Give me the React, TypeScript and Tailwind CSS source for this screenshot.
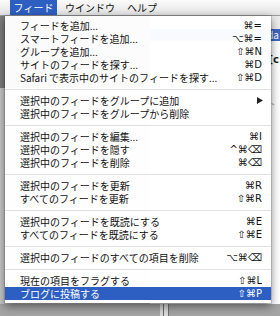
import React from 'react'

type Row = [string, string]

const GROUPS: Row[][] = [
  [
    ['フィードを追加...', '⌘='],
    ['スマートフィードを追加...', '⌥⌘='],
    ['グループを追加...', '⇧⌘N'],
    ['サイトのフィードを探す...', '⌘D'],
    ['Safari で表示中のサイトのフィードを探す...', '⇧⌘D'],
  ],
  [
    ['選択中のフィードをグループに追加', '>'],
    ['選択中のフィードをグループから削除', ''],
  ],
  [
    ['選択中のフィードを編集...', '⌘I'],
    ['選択中のフィードを隠す', '^⌘⌫'],
    ['選択中のフィードを削除', '⌘⌫'],
  ],
  [
    ['選択中のフィードを更新', '⌘R'],
    ['すべてのフィードを更新', '⇧⌘R'],
  ],
  [
    ['選択中のフィードを既読にする', '⌘E'],
    ['すべてのフィードを既読にする', '⇧⌘E'],
  ],
  [['選択中のフィードのすべての項目を削除', '⌥⌘⌫']],
  [
    ['現在の項目をフラグする', '⇧⌘L'],
    ['ブログに投稿する', '⇧⌘P'],
  ],
]

function MenuRow({ label, keys, active }: { label: string; keys: string; active: boolean }) {
  return (
    <div
      className={`flex h-[13px] items-center justify-between overflow-hidden pl-[15px] pr-[9px] ${
        active ? 'bg-[#2d5ec2] text-white' : 'text-[#111]'
      }`}
    >
      <span className="inline-block h-[13px] overflow-hidden whitespace-nowrap leading-[13px]">{label}</span>
      {keys === '>' ? (
        <svg width="6" height="7" viewBox="0 0 6 7" className="mr-[-1px]">
          <path d="M0 0 L6 3.5 L0 7 Z" fill="#222" />
        </svg>
      ) : (
        <span className="inline-block h-[13px] overflow-hidden whitespace-nowrap font-['DejaVu_Sans',sans-serif] text-[10px] leading-[13px]">
          {keys}
        </span>
      )}
    </div>
  )
}

export default function App() {
  const last = GROUPS.length - 1

  return (
    <div className="relative flex h-[316px] w-[280px] flex-col overflow-hidden bg-[#a9a9a9] font-['Noto_Sans_CJK_JP',sans-serif] text-[10px]">
      {/* menu bar */}
      <div className="flex h-[16px] items-stretch border-b border-[#9c9c9c] bg-gradient-to-b from-[#fbfbfb] to-[#e4e4e4] text-[10px] text-[#111]">
        <div className="ml-[10px] flex w-[47px] items-center justify-center bg-[#2d5ec2] text-white">フィード</div>
        <div className="ml-[8px] flex items-center">ウインドウ</div>
        <div className="ml-[12px] flex items-center">ヘルプ</div>
      </div>

      {/* desktop behind the menu */}
      <div className="flex flex-1">
        <div className="flex w-[150px] flex-col">
          <div className="h-[72px] bg-gradient-to-r from-[#7d7d7d] to-[#9a9a9a]" />
          <div className="flex-1 bg-[#c9c9c9]" />
          <div className="h-[12px] bg-[#a4a4a4]" />
        </div>
        <div className="flex flex-1 flex-col bg-white">
          <div className="h-[13px] bg-[#ececec]" />
          <div className="flex h-[12px] items-center justify-end bg-[#3a67c6] pr-[1px] text-[10px] leading-none text-white">
            da
          </div>
          <div className="flex h-[26px] items-end justify-end pr-[1px] font-['DejaVu_Sans',sans-serif] text-[10px] font-bold text-[#222]">
            [c
          </div>
          <div className="mt-[28px] flex justify-end text-[9px] text-[#999]">を、</div>
          <div className="flex-1" />
          <div className="flex h-[12px] bg-[#a4a4a4]">
            <div className="w-[10px]" />
            <div className="w-[3px] bg-[#d6d6d6]" />
            <div className="w-px bg-[#6a6a6a]" />
            <div className="w-[4px] bg-[#dadada]" />
            <div className="w-px bg-[#707070]" />
          </div>
        </div>
      </div>

      {/* dropdown */}
      <div className="absolute left-[5px] top-[16px] w-[266px] bg-white/[0.97] pb-[3px] pt-[3px] shadow-[0_3px_9px_rgba(0,0,0,0.5),0_0_0_1px_rgba(0,0,0,0.12)]">
        {GROUPS.map((group, gi) => (
          <div key={gi}>
            {group.map(([label, keys], ri) => (
              <MenuRow
                key={label}
                label={label}
                keys={keys}
                active={gi === last && ri === group.length - 1}
              />
            ))}
            {gi < last && (
              <div className="flex h-[10px] items-center">
                <div className="h-px w-full bg-[#dedede]" />
              </div>
            )}
          </div>
        ))}
      </div>
    </div>
  )
}
